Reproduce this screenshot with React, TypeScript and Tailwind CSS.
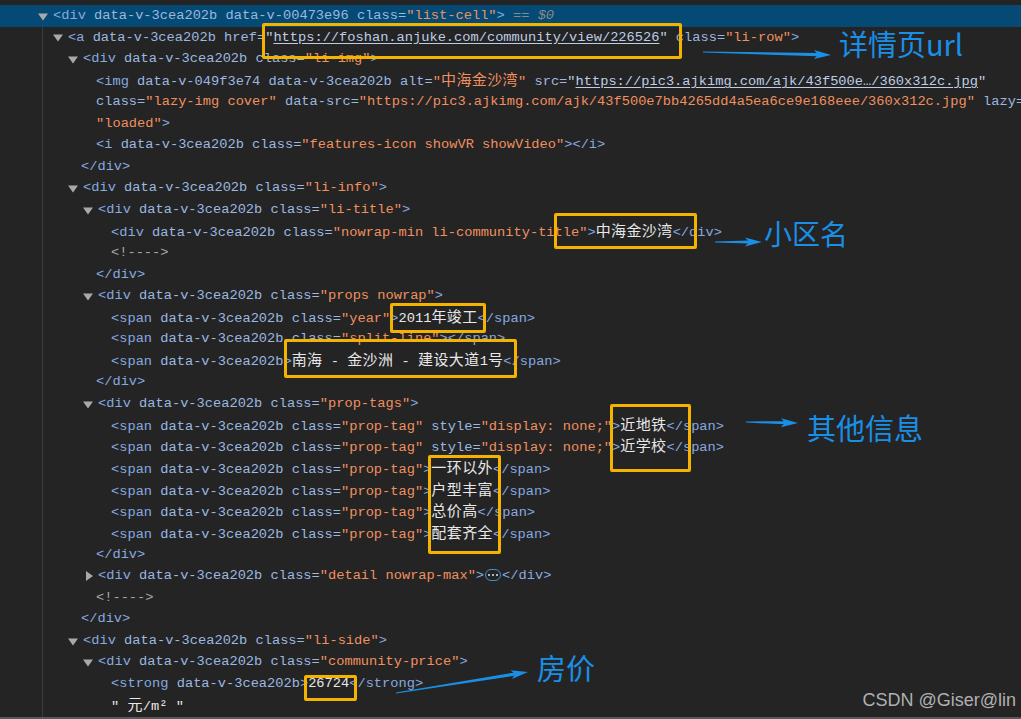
import React from 'react';

type Tok = [string, string];

const kindCls: Record<string, string> = {
  t: 'text-[#86a9e0]',
  a: 'text-[#9bb8e0]',
  v: 'text-[#f0905f]',
  q: 'text-[#bfcde4]',
  l: 'text-[#bfcde4] underline underline-offset-[2px]',
  x: 'text-[#e8e8e8]',
  c: 'text-[#a8a8a8]',
  g: 'text-[#8a8a8a] italic',
};

function withCjk(s: string) {
  const parts = s.split(/([\u3000-\u9fff]+)/);
  return parts.map((p, i) =>
    p === '' ? null : /[\u3000-\u9fff]/.test(p) ? (
      <span key={i} className="font-['Noto_Sans_CJK_SC',sans-serif] text-[15px] tracking-[0.4px]">
        {p}
      </span>
    ) : (
      <React.Fragment key={i}>{p}</React.Fragment>
    )
  );
}

function Dots() {
  return (
    <span className="inline-flex items-center justify-center gap-[2px] w-[16px] h-[12px] mx-[1px] rounded-full border border-[#3f8fc4] align-middle -translate-y-[1px]">
      <span className="w-[2px] h-[2px] rounded-full bg-[#e0e0e0]" />
      <span className="w-[2px] h-[2px] rounded-full bg-[#e0e0e0]" />
      <span className="w-[2px] h-[2px] rounded-full bg-[#e0e0e0]" />
    </span>
  );
}

function Tri({ dir }: { dir: 'down' | 'right' }) {
  return (
    <span className="inline-flex w-[15px] shrink-0 items-center">
      {dir === 'down' ? (
        <svg width="10" height="8" viewBox="0 0 10 8" className="translate-y-[1px]">
          <polygon points="0,0.5 10,0.5 5,7.5" fill="#a9a9a9" />
        </svg>
      ) : (
        <svg width="10" height="10" viewBox="0 0 10 10" className="ml-[3px]">
          <polygon points="0,0 7,5 0,10" fill="#a9a9a9" />
        </svg>
      )}
    </span>
  );
}

function Row({ pad, tri, toks, sel }: { pad: string; tri?: 'down' | 'right'; toks: Tok[]; sel?: boolean }) {
  return (
    <div
      className={
        'flex items-center h-[21.56px] leading-[21.56px] whitespace-nowrap overflow-hidden ' +
        pad +
        (sel ? ' bg-[#044a75]' : '')
      }
    >
      {tri && <Tri dir={tri} />}
      <span>
        {toks.map(([k, s], i) =>
          k === 'd' ? (
            <Dots key={i} />
          ) : (
            <span key={i} className={kindCls[k]}>
              {withCjk(s)}
            </span>
          )
        )}
      </span>
    </div>
  );
}

const DV = ' data-v-3cea202b';

function openTag(tag: string, cls?: string): Tok[] {
  const t: Tok[] = [['t', '<' + tag]];
  if (cls !== undefined) {
    t.push(['a', DV + ' class=']);
    t.push(['v', '"' + cls + '"']);
  } else {
    t.push(['a', DV]);
  }
  t.push(['t', '>']);
  return t;
}

function propTag(text: string, hidden?: boolean): Tok[] {
  const t: Tok[] = [
    ['t', '<span'],
    ['a', DV + ' class='],
    ['v', '"prop-tag"'],
  ];
  if (hidden) {
    t.push(['a', ' style=']);
    t.push(['v', '"display: none;"']);
  }
  t.push(['t', '>']);
  t.push(['x', text]);
  t.push(['t', '</span>']);
  return t;
}

// paddings inside the guide container (content starts at x=43)
const TRI1 = 'pl-[10px]';
const TRI2 = 'pl-[25px]';
const TRI3 = 'pl-[40px]';
const LEAF2 = 'pl-[38px]';
const LEAF3 = 'pl-[53px]';
const LEAF4 = 'pl-[68px]';

function Arrow({ x1, y1, x2, y2 }: { x1: number; y1: number; x2: number; y2: number }) {
  const dx = x2 - x1;
  const dy = y2 - y1;
  const len = Math.sqrt(dx * dx + dy * dy);
  const ux = dx / len;
  const uy = dy / len;
  const hl = 17;
  const hw = 4.5;
  const bx = x2 - ux * hl;
  const by = y2 - uy * hl;
  const px = -uy;
  const py = ux;
  const pts = `${x2},${y2} ${bx + px * hw},${by + py * hw} ${bx + ux * 4},${by + uy * 4} ${bx - px * hw},${by - py * hw}`;
  const tail = `${x1 + px * 0.6},${y1 + py * 0.6} ${bx + ux * 4 + px * 1.6},${by + uy * 4 + py * 1.6} ${bx + ux * 4 - px * 1.6},${by + uy * 4 - py * 1.6} ${x1 - px * 0.6},${y1 - py * 0.6}`;
  return (
    <g fill="#1a8fe6">
      <polygon points={tail} />
      <polygon points={pts} />
    </g>
  );
}

function Box({ cls }: { cls: string }) {
  return <div className={'absolute border-[3px] border-[#f5b301] rounded-[2px] ' + cls} />;
}

export default function App() {
  return (
    <div className="relative w-[1021px] h-[719px] overflow-hidden bg-[#242424] font-['Liberation_Mono',monospace] text-[13.7px]">
      <div className="flex flex-col pt-[5px] h-[717px]">
        <Row
          sel
          pad="pl-[38px]"
          tri="down"
          toks={[
            ['t', '<div'],
            ['a', DV + ' data-v-00473e96 class='],
            ['v', '"list-cell"'],
            ['t', '>'],
            ['g', ' == $0'],
          ]}
        />
        <div className="flex flex-col ml-[42px] border-l border-[#3b3b3b] flex-1">
          <Row
            pad={TRI1}
            tri="down"
            toks={[
              ['t', '<a'],
              ['a', DV + ' href='],
              ['q', '"'],
              ['l', 'https://foshan.anjuke.com/community/view/226526'],
              ['q', '"'],
              ['a', ' class='],
              ['v', '"li-row"'],
              ['t', '>'],
            ]}
          />
          <Row pad={TRI2} tri="down" toks={openTag('div', 'li-img')} />
          <Row
            pad={LEAF3}
            toks={[
              ['t', '<img'],
              ['a', ' data-v-049f3e74' + DV + ' alt='],
              ['v', '"中海金沙湾"'],
              ['a', ' src='],
              ['q', '"'],
              ['l', 'https://pic3.ajkimg.com/ajk/43f500e…/360x312c.jpg'],
              ['q', '"'],
            ]}
          />
          <Row
            pad={LEAF3}
            toks={[
              ['a', 'class='],
              ['v', '"lazy-img cover"'],
              ['a', ' data-src='],
              ['v', '"https://pic3.ajkimg.com/ajk/43f500e7bb4265dd4a5ea6ce9e168eee/360x312c.jpg"'],
              ['a', ' lazy='],
            ]}
          />
          <Row
            pad={LEAF3}
            toks={[
              ['v', '"loaded"'],
              ['t', '>'],
            ]}
          />
          <Row
            pad={LEAF3}
            toks={[
              ['t', '<i'],
              ['a', DV + ' class='],
              ['v', '"features-icon showVR showVideo"'],
              ['t', '></i>'],
            ]}
          />
          <Row pad={LEAF2} toks={[['t', '</div>']]} />
          <Row pad={TRI2} tri="down" toks={openTag('div', 'li-info')} />
          <Row pad={TRI3} tri="down" toks={openTag('div', 'li-title')} />
          <Row
            pad={LEAF4}
            toks={[...openTag('div', 'nowrap-min li-community-title'), ['x', '中海金沙湾'], ['t', '</div>']]}
          />
          <Row pad={LEAF4} toks={[['c', '<!---->']]} />
          <Row pad={LEAF3} toks={[['t', '</div>']]} />
          <Row pad={TRI3} tri="down" toks={openTag('div', 'props nowrap')} />
          <Row pad={LEAF4} toks={[...openTag('span', 'year'), ['x', '2011年竣工'], ['t', '</span>']]} />
          <Row pad={LEAF4} toks={[...openTag('span', 'split-line'), ['t', '</span>']]} />
          <Row
            pad={LEAF4}
            toks={[...openTag('span'), ['x', '南海 - 金沙洲 - 建设大道1号'], ['t', '</span>']]}
          />
          <Row pad={LEAF3} toks={[['t', '</div>']]} />
          <Row pad={TRI3} tri="down" toks={openTag('div', 'prop-tags')} />
          <Row pad={LEAF4} toks={propTag('近地铁', true)} />
          <Row pad={LEAF4} toks={propTag('近学校', true)} />
          <Row pad={LEAF4} toks={propTag('一环以外')} />
          <Row pad={LEAF4} toks={propTag('户型丰富')} />
          <Row pad={LEAF4} toks={propTag('总价高')} />
          <Row pad={LEAF4} toks={propTag('配套齐全')} />
          <Row pad={LEAF3} toks={[['t', '</div>']]} />
          <Row
            pad={TRI3}
            tri="right"
            toks={[...openTag('div', 'detail nowrap-max'), ['d', ''], ['t', '</div>']]}
          />
          <Row pad={LEAF3} toks={[['c', '<!---->']]} />
          <Row pad={LEAF2} toks={[['t', '</div>']]} />
          <Row pad={TRI2} tri="down" toks={openTag('div', 'li-side')} />
          <Row pad={TRI3} tri="down" toks={openTag('div', 'community-price')} />
          <Row pad={LEAF4} toks={[...openTag('strong'), ['x', '26724'], ['t', '</strong>']]} />
          <Row pad={LEAF4} toks={[['x', '" 元/m² "']]} />
        </div>
      </div>
      <div className="h-[2px] bg-[#5a5a5a]" />

      {/* annotation boxes */}
      <Box cls="left-[262px] top-[23px] w-[420px] h-[36px]" />
      <Box cls="left-[554px] top-[213px] w-[143px] h-[36px]" />
      <Box cls="left-[390px] top-[303px] w-[96px] h-[30px]" />
      <Box cls="left-[284px] top-[339px] w-[233px] h-[39px]" />
      <Box cls="left-[610px] top-[404px] w-[81px] h-[68px]" />
      <Box cls="left-[428px] top-[455px] w-[73px] h-[99px]" />
      <Box cls="left-[304px] top-[675px] w-[53px] h-[26px]" />

      <svg className="absolute inset-0 pointer-events-none" width="1021" height="719">
        <Arrow x1={703} y1={52} x2={831} y2={55} />
        <Arrow x1={715} y1={242} x2={762} y2={242} />
        <Arrow x1={746} y1={422} x2={798} y2={423} />
        <Arrow x1={396} y1={693} x2={528} y2={672} />
      </svg>

      <div className="absolute left-[839px] top-[29px] text-[29px] leading-none text-[#1a8fe6] font-['Noto_Sans_CJK_SC',sans-serif]">
        详情页url
      </div>
      <div className="absolute left-[764px] top-[219px] text-[28px] leading-none text-[#1a8fe6] font-['Noto_Sans_CJK_SC',sans-serif]">
        小区名
      </div>
      <div className="absolute left-[807px] top-[413px] text-[29px] leading-none text-[#1a8fe6] font-['Noto_Sans_CJK_SC',sans-serif]">
        其他信息
      </div>
      <div className="absolute left-[537px] top-[653px] text-[29px] leading-none text-[#1a8fe6] font-['Noto_Sans_CJK_SC',sans-serif]">
        房价
      </div>
      <div className="absolute right-[5px] top-[691px] text-[18px] leading-none text-[#b0b0b0] font-['Liberation_Sans',Arial,sans-serif]">
        CSDN @Giser@lin
      </div>
    </div>
  );
}
